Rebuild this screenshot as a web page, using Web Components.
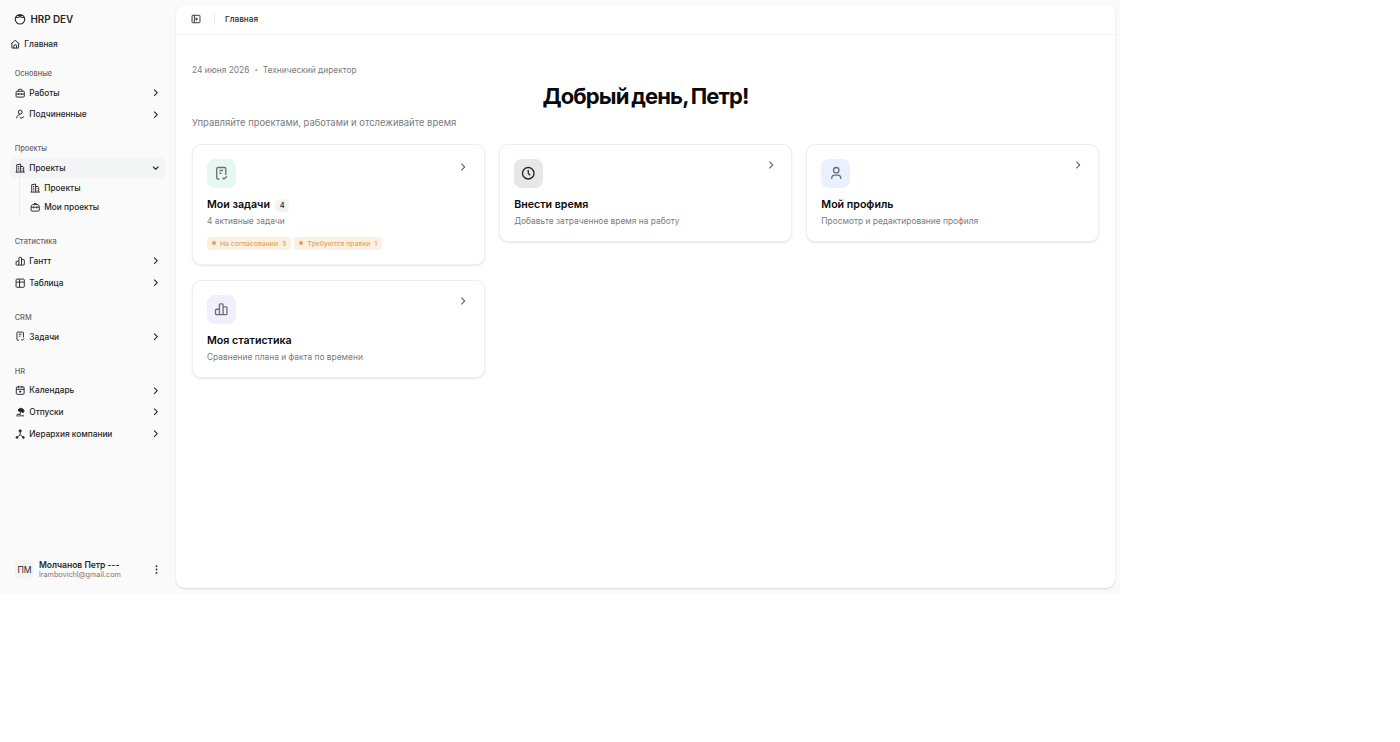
<!DOCTYPE html>
<html lang="ru">
<head>
<meta charset="utf-8">
<title>HRP DEV</title>
<style>
  body {
    background: #ffffff;
    color: #27272a;
    font-family: Inter, 'Liberation Sans', sans-serif;
    margin: 0;
  }
</style>
</head>
<body>
<hr-app></hr-app>

<script>
const ICONS = {
  logo: '<circle cx="12" cy="12.500" r="9.500"/><path d="M3.500 8.500c3 1.300 6 .2 8.500-1.500 2.500 1.700 5.500 2.800 8.500 1.500M6 5h12"/>',
  home: '<path d="M2 11.500 12 3l10 8.500M4.500 10v11h15V10M9 21v-5a3 3 0 0 1 6 0v5"/>',
  panel: '<rect x="2.500" y="3" width="19" height="18" rx="2"/><path d="M8 3v18M12 9l4 3-4 3z"/>',
  briefcase: '<rect x="2.500" y="7.500" width="19" height="13.500" rx="2"/><path d="M7.500 8V5a2 2 0 0 1 2-2h5a2 2 0 0 1 2 2v3M3 14h18M8.500 12v4M15.500 12v4"/>',
  bag: '<path d="M2.500 12h19v7a2 2 0 0 1-2 2h-15a2 2 0 0 1-2-2zM2.500 12c0-4 2-6 5-6h9c3 0 5 2 5 6M8 6c0-4 8-4 8 0M8.500 11v4M15.500 11v4"/>',
  follow: '<circle cx="12" cy="7" r="4.500"/><path d="M4 21.500c0-5 3-8.500 8-9M11 19l3 2.500 6.500-3.500"/>',
  building: '<path d="M4 21V4l9-1.500V21M13 8h5.500l1.500 2v11M1.500 21h21M7 8h3M7 12h3M7 16h3M16.500 12v1.500M16.500 16.500v1.500"/>',
  chart: '<path d="M9 21V4.500A1.500 1.500 0 0 1 10.500 3h3A1.500 1.500 0 0 1 15 4.500V21M9 12H4A1.500 1.500 0 0 0 2.500 13.500v6A1.500 1.500 0 0 0 4 21h16a1.500 1.500 0 0 0 1.500-1.500v-10A1.500 1.500 0 0 0 20 8h-5"/>',
  table: '<rect x="2.500" y="2.500" width="19" height="19" rx="2"/><path d="M3 9.500h18M10.500 3v18"/>',
  task: '<path d="M9 21.500H6.500a2 2 0 0 1-2-2V4.500a2 2 0 0 1 2-2h11a2 2 0 0 1 2 2V15M9 7.500h6M9 12h3.500M14 19.500l2.500 2 5-4"/>',
  calendar: '<rect x="3" y="4.500" width="18" height="17" rx="2"/><path d="M3 10h18M8 2v5M16 2v5M12 13v5M9.500 15h5"/>',
  beach: '<path fill="currentColor" d="M7 7c4-6 12-5 14 2l-2 4-5-3-4 1z"/><path d="m15 9-4 8M2 21c3-2 5 1 8-.500s5 1.500 8-.500l3 1M4 17h9"/>',
  nodes: '<circle cx="12" cy="4.500" r="2.500" fill="currentColor"/><circle cx="4.500" cy="19.500" r="2" fill="currentColor"/><circle cx="19.500" cy="19.500" r="2" fill="currentColor"/><path d="M12 5v8M5 19l7-6 7 6"/>',
  clock: '<circle cx="12" cy="12" r="9.500"/><path d="M12 6.500V12l3 3.500"/>',
  user: '<circle cx="12" cy="7" r="4.500"/><path d="M4.500 21.500v-1c0-3.500 2-5.500 5-5.500h5c3 0 5 2 5 5.500v1"/>',
  right: '<path d="m8 4 8 8-8 8"/>',
  down: '<path d="m5 9 7 7 7-7"/>',
  more: '<g fill="currentColor" stroke="none"><circle cx="12" cy="3" r="2.400"/><circle cx="12" cy="12" r="2.400"/><circle cx="12" cy="21" r="2.400"/></g>'
};

class HrElement extends HTMLElement {
  constructor() {
    super();
    const template = document.createElement( 'template' );
    template.innerHTML = this.template();
    this.attachShadow( {mode: 'open'} );
    this.shadowRoot.appendChild( template.content.cloneNode( true ) );
  }
}

class HrIcon extends HTMLElement {
  constructor() {
    super();
    this.attachShadow( {mode: 'open'} );
  }

  connectedCallback() {
    this.shadowRoot.innerHTML = /* template */ `
      <style>
        :host {
          display: block;
          flex: none;
          height: var( --size, 10.4px );
          width: var( --size, 10.4px );
        }

        svg {
          display: block;
          height: 100%;
          overflow: visible;
          width: 100%;
        }
      </style>
      <svg viewBox="0 0 24 24" fill="none" stroke="currentColor" stroke-linejoin="round"
        stroke-width="${this.getAttribute( 'weight' ) || 2.2}">${ICONS[this.getAttribute( 'name' )]}</svg>
    `;
  }
}
customElements.define( 'hr-icon', HrIcon );

class HrNavItem extends HTMLElement {
  constructor() {
    super();
    this.attachShadow( {mode: 'open'} );
  }

  connectedCallback() {
    const arrow = this.getAttribute( 'arrow' );
    this.shadowRoot.innerHTML = /* template */ `
      <style>
        :host {
          align-items: center;
          border-radius: 5px;
          box-sizing: border-box;
          display: flex;
          font-size: 8.3px;
          font-weight: 500;
          gap: 4.4px;
          height: 19.6px;
          padding: 0 5.5px 0 4.5px;
          white-space: nowrap;
        }

        :host( [active] ) {
          background: #f3f4f4;
        }

        span {
          flex: 1;
        }

        .arrow {
          --size: 9.4px;
        }
      </style>
      <hr-icon name="${this.getAttribute( 'icon' )}"></hr-icon>
      <span><slot></slot></span>
      ${arrow ? `<hr-icon class="arrow" name="${arrow}" weight="2.8"></hr-icon>` : ''}
    `;
  }
}
customElements.define( 'hr-nav-item', HrNavItem );

class HrNavGroup extends HTMLElement {
  constructor() {
    super();
    this.attachShadow( {mode: 'open'} );
  }

  connectedCallback() {
    this.shadowRoot.innerHTML = /* template */ `
      <style>
        :host {
          display: block;
          padding: 0 10px;
        }

        .label {
          color: #67676c;
          font-size: 7.4px;
          font-weight: 500;
          line-height: 20.2px;
          margin-bottom: -1.2px;
          padding-left: 4.7px;
        }

        .items {
          display: flex;
          flex-direction: column;
          gap: 2.1px;
        }

        ::slotted( .sub ) {
          border-left: 1px solid #ececee;
          margin: -2px 0 0 9px;
          padding-left: 5px;
        }
      </style>
      <div class="label">${this.getAttribute( 'label' )}</div>
      <div class="items"><slot></slot></div>
    `;
  }
}
customElements.define( 'hr-nav-group', HrNavGroup );

class HrSidebar extends HrElement {
  template() {
    return /* template */ `
      <style>
        :host {
          box-sizing: border-box;
          display: flex;
          flex-direction: column;
          flex: none;
          height: 593px;
          width: 176px;
        }

        .brand {
          align-items: center;
          display: flex;
          font-size: 9.9px;
          font-weight: 600;
          gap: 5px;
          height: 20px;
          letter-spacing: -0.05px;
          padding: 9px 0 1px 13.5px;
        }

        .brand hr-icon {
          --size: 12px;
        }

        .home {
          margin: 4px 10px 0 5px;
        }

        nav {
          display: flex;
          flex-direction: column;
          gap: 15.15px;
          margin-top: 10.3px;
        }

        .user {
          align-items: center;
          display: flex;
          gap: 5px;
          height: 20px;
          margin: auto 15.5px 14px 15px;
        }

        .avatar {
          background: #f3f3f4;
          border-radius: 5px;
          font-size: 8.6px;
          height: 19px;
          line-height: 20px;
          text-align: center;
          width: 19px;
        }

        .who {
          flex: 1;
          line-height: 10px;
          padding-top: 1px;
        }

        .name {
          font-size: 8.5px;
          font-weight: 600;
        }

        .mail {
          color: #77777c;
          font-size: 7.25px;
        }

        .user hr-icon {
          --size: 9px;
        }
      </style>
      <div class="brand"><hr-icon name="logo"></hr-icon>HRP DEV</div>
      <hr-nav-item class="home" icon="home">Главная</hr-nav-item>
      <nav>
        <hr-nav-group label="Основные">
          <hr-nav-item icon="briefcase" arrow="right">Работы</hr-nav-item>
          <hr-nav-item icon="follow" arrow="right">Подчиненные</hr-nav-item>
        </hr-nav-group>
        <hr-nav-group label="Проекты">
          <hr-nav-item icon="building" arrow="down" active>Проекты</hr-nav-item>
          <div class="sub">
            <hr-nav-item icon="building">Проекты</hr-nav-item>
            <hr-nav-item icon="bag">Мои проекты</hr-nav-item>
          </div>
        </hr-nav-group>
        <hr-nav-group label="Статистика">
          <hr-nav-item icon="chart" arrow="right">Гантт</hr-nav-item>
          <hr-nav-item icon="table" arrow="right">Таблица</hr-nav-item>
        </hr-nav-group>
        <hr-nav-group label="CRM">
          <hr-nav-item icon="task" arrow="right">Задачи</hr-nav-item>
        </hr-nav-group>
        <hr-nav-group label="HR">
          <hr-nav-item icon="calendar" arrow="right">Календарь</hr-nav-item>
          <hr-nav-item icon="beach" arrow="right">Отпуски</hr-nav-item>
          <hr-nav-item icon="nodes" arrow="right">Иерархия компании</hr-nav-item>
        </hr-nav-group>
      </nav>
      <div class="user">
        <div class="avatar">ПМ</div>
        <div class="who">
          <div class="name">Молчанов Петр ---</div>
          <div class="mail">lrambovichl@gmail.com</div>
        </div>
        <hr-icon name="more"></hr-icon>
      </div>
    `;
  }
}
customElements.define( 'hr-sidebar', HrSidebar );

class HrCard extends HTMLElement {
  constructor() {
    super();
    this.attachShadow( {mode: 'open'} );
  }

  connectedCallback() {
    this.shadowRoot.innerHTML = /* template */ `
      <style>
        :host {
          background: #ffffff;
          border: 1px solid #efeff0;
          border-radius: 9px;
          box-shadow: 0 1px 2px rgb( 0 0 0 / 0.10 );
          box-sizing: border-box;
          display: block;
          padding: 14px;
        }

        .top {
          display: flex;
          justify-content: space-between;
        }

        .tile {
          align-items: center;
          background: var( --tile );
          border-radius: 8px;
          color: var( --ink, #6c7076 );
          display: flex;
          height: 29px;
          justify-content: center;
          width: 29px;
          --size: 14.5px;
        }

        .arrow {
          color: #68686d;
          margin: var( --arrow-top, 1px ) 1.3px 0 0;
          --size: 10px;
        }

        .title {
          align-items: center;
          color: #0a0a0a;
          display: flex;
          font-size: 10.65px;
          font-weight: 600;
          gap: 5px;
          height: 14px;
          margin-top: 9.5px;
        }

        p {
          color: #7b7b80;
          font-size: 8.4px;
          line-height: 12px;
          margin: 3.5px 0 0 0;
        }
      </style>
      <div class="top">
        <div class="tile"><hr-icon name="${this.getAttribute( 'icon' )}"></hr-icon></div>
        <hr-icon class="arrow" name="right" weight="2.7"></hr-icon>
      </div>
      <div class="title">${this.getAttribute( 'label' )}<slot name="count"></slot></div>
      <p>${this.getAttribute( 'text' )}</p>
      <slot></slot>
    `;
  }
}
customElements.define( 'hr-card', HrCard );

class HrStatus extends HTMLElement {
  constructor() {
    super();
    this.attachShadow( {mode: 'open'} );
  }

  connectedCallback() {
    this.shadowRoot.innerHTML = /* template */ `
      <style>
        :host {
          align-items: center;
          background: #fdf0e1;
          border-radius: 4px;
          box-sizing: border-box;
          color: #dea668;
          display: flex;
          font-size: 6.85px;
          font-weight: 500;
          gap: 4px;
          height: 13px;
          padding: 0 5px;
          white-space: nowrap;
        }

        i {
          background: #dda45f;
          border-radius: 50%;
          height: 4px;
          width: 4px;
        }
      </style>
      <i></i><span><slot></slot></span><span>${this.getAttribute( 'count' )}</span>
    `;
  }
}
customElements.define( 'hr-status', HrStatus );

class HrHome extends HrElement {
  template() {
    return /* template */ `
      <style>
        :host {
          background: #ffffff;
          border-radius: 9px;
          box-shadow: 0 1px 2px rgb( 0 0 0 / 0.14 );
          box-sizing: border-box;
          display: block;
          height: 583px;
          margin-top: 5px;
          width: 939px;
        }

        header {
          align-items: center;
          border-bottom: 1px solid #f3f3f4;
          box-sizing: border-box;
          display: flex;
          font-size: 8.2px;
          font-weight: 500;
          height: 29.5px;
          padding-left: 15px;
          --size: 10px;
        }

        header i {
          background: #ececee;
          height: 11px;
          margin: 0 10px 0 13px;
          width: 1px;
        }

        main {
          padding: 28px 16px 0 16px;
        }

        .meta {
          color: #7b7b80;
          display: flex;
          font-size: 8.38px;
          gap: 5px;
          line-height: 14px;
        }

        .meta .dot {
          font-size: 6px;
        }

        h1 {
          color: #0a0a0a;
          font-size: 22px;
          font-weight: 700;
          letter-spacing: -0.9px;
          line-height: 28px;
          margin: 5.5px 0 0 0;
          text-align: center;
          word-spacing: -1.5px;
        }

        .lead {
          color: #7b7b80;
          font-size: 9.44px;
          line-height: 16px;
          margin: 5px 0 13px 0;
        }

        .grid {
          align-items: start;
          display: grid;
          gap: 14.5px;
          grid-template-columns: repeat( 3, 1fr );
        }

        .grid hr-card {
          height: 98px;
        }

        .grid .tasks {
          height: 121.3px;
          --arrow-top: 3px;
        }

        .count {
          background: #f3f3f4;
          border-radius: 5px;
          color: #27272a;
          font-size: 7.5px;
          font-weight: 500;
          height: 13px;
          line-height: 13px;
          margin-top: 1px;
          text-align: center;
          width: 14.5px;
        }

        .statuses {
          display: flex;
          gap: 3px;
          margin-top: 9.5px;
        }
      </style>
      <header><hr-icon name="panel"></hr-icon><i></i>Главная</header>
      <main>
        <div class="meta"><span>24 июня 2026</span><span class="dot">•</span><span>Технический директор</span></div>
        <h1>Добрый день, Петр!</h1>
        <div class="lead">Управляйте проектами, работами и отслеживайте время</div>
        <div class="grid">
          <hr-card class="tasks" style="--tile: #e7f7f2" icon="task" label="Мои задачи" text="4 активные задачи">
            <span slot="count" class="count">4</span>
            <div class="statuses">
              <hr-status count="3">На согласовании</hr-status>
              <hr-status count="1">Требуются правки</hr-status>
            </div>
          </hr-card>
          <hr-card style="--tile: #e7e7e7; --ink: #27272a" icon="clock" label="Внести время" text="Добавьте затраченное время на работу"></hr-card>
          <hr-card style="--tile: #eaf0fe" icon="user" label="Мой профиль" text="Просмотр и редактирование профиля"></hr-card>
          <hr-card style="--tile: #f0effe" icon="chart" label="Моя статистика" text="Сравнение плана и факта по времени"></hr-card>
        </div>
      </main>
    `;
  }
}
customElements.define( 'hr-home', HrHome );

class HrApp extends HrElement {
  template() {
    return /* template */ `
      <style>
        :host {
          background: #fafafa;
          display: flex;
          height: 593.5px;
          width: 1120px;
        }
      </style>
      <hr-sidebar></hr-sidebar>
      <hr-home></hr-home>
    `;
  }
}
customElements.define( 'hr-app', HrApp );
</script>
</body>
</html>
